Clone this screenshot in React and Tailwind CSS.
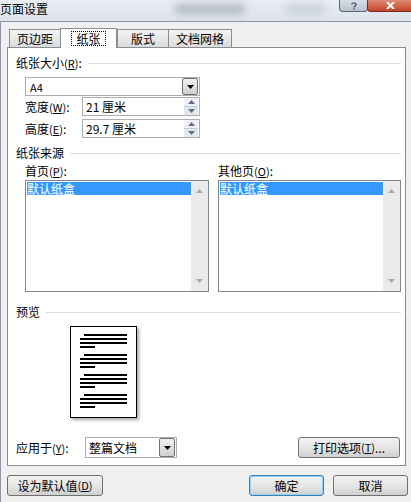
import React from 'react';

const font = { fontFamily: '"Noto Sans CJK SC", "Noto Sans", sans-serif' };

const Key = ({ k }) => (
  <span className="text-[11px]">(<span className="underline">{k}</span>)</span>
);

const SectionHeader = ({ children, className = '' }) => (
  <div className={`flex items-center h-[14px] pr-[4px] ${className}`}>
    <span className="text-[12px] leading-[14px] text-black whitespace-nowrap">{children}</span>
    <div className="flex-1 ml-[6px] h-px bg-[#d5dfe5]" />
  </div>
);

const DropArrow = ({ h = 'h-[17px]' }) => (
  <div className={`w-[16px] ${h} border border-[#707070] rounded-[2px] bg-gradient-to-b from-[#f2f2f2] to-[#cfcfcf] flex items-center justify-center`}>
    <svg width="7" height="4" viewBox="0 0 7 4">
      <path d="M0 0 L7 0 L3.5 4 Z" fill="#000" />
    </svg>
  </div>
);

const Spin = () => (
  <div className="w-[14px] h-[17px] flex flex-col mr-px">
    <div className="flex-1 flex items-center justify-center bg-[#eef0f4] border-b border-[#c5cbd6]">
      <svg width="7" height="4" viewBox="0 0 7 4"><path d="M0 4 L7 4 L3.5 0 Z" fill="#5d6f93" /></svg>
    </div>
    <div className="flex-1 flex items-center justify-center bg-[#e3e7ee]">
      <svg width="7" height="4" viewBox="0 0 7 4"><path d="M0 0 L7 0 L3.5 4 Z" fill="#5d6f93" /></svg>
    </div>
  </div>
);

const ListBox = ({ width }) => (
  <div className={`${width} h-[112px] border border-[#828790] bg-white flex`}>
    <div className="flex-1 pt-px pl-px">
      <div className="h-[13px] bg-[#3399ff] text-white text-[12px] leading-[13px]">默认纸盒</div>
    </div>
    <div className="w-[17px] bg-[#eaeaea] flex flex-col justify-between items-center py-[8px]">
      <svg width="7" height="4" viewBox="0 0 7 4"><path d="M0 4 L7 4 L3.5 0 Z" fill="#a8a8a8" /></svg>
      <svg width="7" height="4" viewBox="0 0 7 4"><path d="M0 0 L7 0 L3.5 4 Z" fill="#a8a8a8" /></svg>
    </div>
  </div>
);

const Button = ({ children, className = '', primary = false }) => (
  <div
    className={`h-[21px] rounded-[3px] border ${primary ? 'border-[#3c7fb1] shadow-[inset_0_0_0_1px_#8fd0f5]' : 'border-[#707070]'} bg-gradient-to-b from-[#f2f2f2] via-[#e6e6e6] to-[#d0d0d0] flex items-center justify-center text-[12px] text-black ${className}`}
  >
    {children}
  </div>
);

// 预览页里的一个段落：首行缩进，末行较短
const Paragraph = () => (
  <div className="flex flex-col gap-[2.5px]">
    <div className="h-[1.5px] bg-black ml-[4px]" />
    <div className="h-[1.5px] bg-black" />
    <div className="h-[1.5px] bg-black" />
    <div className="h-[1.5px] bg-black w-[15px]" />
  </div>
);

export default function App() {
  const tabs = [
    { label: '页边距', w: 'w-[52px]' },
    { label: '纸张', w: 'w-[57px]', active: true },
    { label: '版式', w: 'w-[52px]' },
    { label: '文档网格', w: 'w-[64px]' },
  ];

  return (
    <div className="w-[411px] h-[502px] overflow-hidden bg-[#dfe5ec] flex flex-col" style={font}>
      {/* 标题栏 */}
      <div className="relative h-[21px] bg-gradient-to-b from-[#e9eef4] to-[#dde3ea]">
        <div className="absolute left-[175px] top-[4px] w-[70px] h-[10px] bg-[#9aa3ad] blur-[4px] opacity-70" />
        <div className="absolute left-[285px] top-[4px] w-[40px] h-[10px] bg-[#b7c0ca] blur-[4px] opacity-60" />
        <div className="relative pt-[1px] text-[12px] leading-[16px] text-black">页面设置</div>
        <div className="absolute left-[339px] top-0 w-[29px] h-[12px] border border-t-0 border-[#59667a] rounded-b-[4px] bg-gradient-to-b from-[#d7dde6] to-[#b9c3d0] flex items-center justify-center">
          <svg width="6" height="8" viewBox="0 0 6 8">
            <path d="M0.8 2.2 C0.8 0.6 5.2 0.6 5.2 2.4 C5.2 3.6 3 3.8 3 5.4" stroke="#3b4554" strokeWidth="1.2" fill="none" />
            <rect x="2.4" y="6.4" width="1.3" height="1.3" fill="#3b4554" />
          </svg>
        </div>
        <div className="absolute left-[367px] top-0 w-[46px] h-[12px] border border-t-0 border-[#7a2a20] rounded-bl-[4px] bg-gradient-to-b from-[#e08a72] to-[#c2432c] flex items-center justify-center">
          <svg width="9" height="7" viewBox="0 0 9 7">
            <path d="M1 0 L8 7 M8 0 L1 7" stroke="#fff" strokeWidth="2" />
          </svg>
        </div>
      </div>

      {/* 客户区 */}
      <div className="flex-1 border-t border-l border-[#8b97a6] bg-[#f0f0f0] pl-[6px] pt-[6px]">
        {/* 选项卡 */}
        <div className="flex items-end h-[19px] pl-[2px]">
          {tabs.map((t) =>
            t.active ? (
              <div
                key={t.label}
                className={`${t.w} h-[20px] -mb-px relative z-10 bg-white border border-b-0 border-[#898c95] flex items-center justify-center text-[12px] text-black`}
              >
                <span className="border border-dotted border-black px-[4px] leading-[13px]">{t.label}</span>
              </div>
            ) : (
              <div
                key={t.label}
                className={`${t.w} h-[18px] border border-b-0 border-[#898c95] -mr-px bg-gradient-to-b from-[#f4f4f4] to-[#dcdcdc] flex items-center justify-center text-[12px] text-black`}
              >
                {t.label}
              </div>
            )
          )}
        </div>

        {/* 面板 */}
        <div className="w-[399px] h-[419px] border border-[#898c95] bg-white pl-[8px] flex flex-col">
          <SectionHeader className="mt-[8px]">
            纸张大小<Key k="R" />:
          </SectionHeader>

          <div className="ml-[9px] mt-[7px] w-[175px] h-[19px] border border-[#abadb3] flex items-center justify-between pl-[4px] pr-px">
            <span className="text-[11px] leading-[12px]">A4</span>
            <DropArrow h="h-[17px]" />
          </div>

          <div className="ml-[9px] mt-px h-[19px] flex items-center">
            <span className="w-[57px] text-[12px] leading-[14px] whitespace-nowrap">
              宽度<Key k="W" />:
            </span>
            <div className="w-[118px] h-[19px] border border-[#abadb3] flex items-center justify-between pl-[3px]">
              <span className="text-[12px] leading-[14px]">21 厘米</span>
              <Spin />
            </div>
          </div>

          <div className="ml-[9px] mt-[3px] h-[19px] flex items-center">
            <span className="w-[57px] text-[12px] leading-[14px] whitespace-nowrap">
              高度<Key k="E" />:
            </span>
            <div className="w-[118px] h-[19px] border border-[#abadb3] flex items-center justify-between pl-[3px]">
              <span className="text-[12px] leading-[14px]">29.7 厘米</span>
              <Spin />
            </div>
          </div>

          <SectionHeader className="mt-[8px]">纸张来源</SectionHeader>

          <div className="ml-[9px] mt-[4px] flex gap-[9px]">
            <div className="flex flex-col">
              <span className="h-[14px] text-[12px] leading-[14px]">
                首页<Key k="P" />:
              </span>
              <div className="mt-[2px]">
                <ListBox width="w-[184px]" />
              </div>
            </div>
            <div className="flex flex-col">
              <span className="h-[14px] text-[12px] leading-[14px]">
                其他页<Key k="O" />:
              </span>
              <div className="mt-[2px]">
                <ListBox width="w-[183px]" />
              </div>
            </div>
          </div>

          <SectionHeader className="mt-[13px]">预览</SectionHeader>

          <div className="ml-[54px] mt-[7px] w-[67px] h-[92px] border border-black bg-white shadow-[2px_2px_3px_rgba(0,0,0,0.35)] pl-[9px] pr-[9px] pt-[7px] flex flex-col gap-[6.5px]">
            <Paragraph />
            <Paragraph />
            <Paragraph />
            <Paragraph />
          </div>

          <div className="mt-[19px] h-[21px] flex items-center pr-[5px]">
            <span className="w-[69px] text-[12px] leading-[14px] whitespace-nowrap">
              应用于<Key k="Y" />:
            </span>
            <div className="w-[92px] h-[21px] border border-[#abadb3] flex items-center justify-between pl-[3px] pr-px">
              <span className="text-[12px] leading-[14px]">整篇文档</span>
              <DropArrow h="h-[19px]" />
            </div>
            <div className="flex-1" />
            <Button className="w-[102px] h-[20px]">
              打印选项<Key k="T" />...
            </Button>
          </div>
        </div>

        {/* 底部按钮 */}
        <div className="mt-[9px] w-[401px] flex items-center">
          <Button className="w-[96px]">
            设为默认值<Key k="D" />
          </Button>
          <div className="flex-1" />
          <Button primary className="w-[75px]">确定</Button>
          <Button className="w-[75px] ml-[9px]">取消</Button>
        </div>
      </div>
    </div>
  );
}
